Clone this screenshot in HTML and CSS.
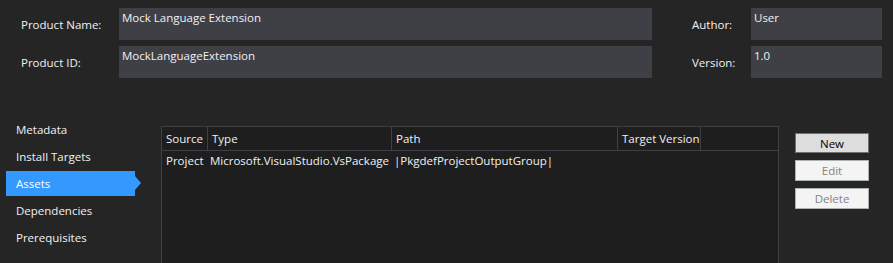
FILE: index.html
```html
<!DOCTYPE html>
<html>
<head>
<meta charset="utf-8">
<link rel="stylesheet" href="styles.css">
</head>
<body>
<div class="header">
  <div class="label">Product Name:</div>
  <div class="box">Mock Language Extension</div>
  <div class="label right">Author:</div>
  <div class="box">User</div>
  <div class="label">Product ID:</div>
  <div class="box">MockLanguageExtension</div>
  <div class="label right">Version:</div>
  <div class="box">1.0</div>
</div>
<div class="main">
  <nav class="nav">
    <div class="nav-item">Metadata</div>
    <div class="nav-item">Install Targets</div>
    <div class="nav-item selected">Assets</div>
    <div class="nav-item">Dependencies</div>
    <div class="nav-item">Prerequisites</div>
  </nav>
  <div class="grid">
    <div class="row head">
      <div class="cell">Source</div>
      <div class="cell">Type</div>
      <div class="cell">Path</div>
      <div class="cell">Target Version</div>
      <div class="cell fill"></div>
    </div>
    <div class="row data">
      <div class="cell">Project</div>
      <div class="cell tight">Microsoft.VisualStudio.VsPackage</div>
      <div class="cell tight">|PkgdefProjectOutputGroup|</div>
      <div class="cell"></div>
      <div class="cell fill"></div>
    </div>
  </div>
  <div class="buttons">
    <button class="btn primary">New</button>
    <button class="btn" disabled>Edit</button>
    <button class="btn" disabled>Delete</button>
  </div>
</div>
</body>
</html>
```

FILE: styles.css
```css
html, body {
  margin: 0;
  padding: 0;
  background: #252526;
  color: #f1f1f1;
  font-family: "Open Sans", "Noto Sans", sans-serif;
  font-size: 11.5px;
  overflow: hidden;
  height: 263px;
}

.header {
  display: grid;
  grid-template-columns: 98px 533px 99px 131px;
  grid-auto-rows: 32px;
  row-gap: 6px;
  padding: 8px 0 0 21px;
}

.label {
  display: flex;
  align-items: center;
  padding-top: 1px;
  box-sizing: border-box;
}

.label.right {
  padding-left: 40px;
}

.box {
  background: #3f3f46;
  padding: 2px 3px;
  line-height: 16px;
}

.main {
  display: flex;
  align-items: flex-start;
  margin-top: 39px;
}

.nav {
  display: flex;
  flex-direction: column;
  gap: 2px;
  margin-left: 6px;
  width: 135px;
}

.nav-item {
  position: relative;
  width: 129px;
  height: 25px;
  line-height: 25px;
  padding-left: 10px;
  box-sizing: border-box;
}

.nav-item.selected {
  background: #3399ff;
  color: #ffffff;
}

.nav-item.selected::after {
  content: "";
  position: absolute;
  left: 129px;
  top: 5px;
  border-left: 6px solid #3399ff;
  border-top: 7px solid transparent;
  border-bottom: 7px solid transparent;
}

.grid {
  margin-left: 20px;
  margin-top: 9px;
  width: 618px;
  height: 140px;
  box-sizing: border-box;
  border: 1px solid #3f3f46;
  border-bottom: none;
  background: #1e1e1e;
}

.row {
  display: grid;
  grid-template-columns: 46px 184px 226px 83px 1fr;
}

.row.head {
  height: 24px;
  border-bottom: 1px solid #3f3f46;
  box-sizing: border-box;
}

.row.head .cell {
  border-right: 1px solid #3f3f46;
  line-height: 23px;
}

.row.head .cell.fill {
  border-right: none;
}

.cell {
  box-sizing: border-box;
  padding-left: 4px;
  white-space: nowrap;
  overflow: visible;
}

.cell.tight {
  padding-left: 2px;
}

.row.data .cell {
  line-height: 20px;
}

.buttons {
  display: flex;
  flex-direction: column;
  gap: 7px;
  margin-left: 16px;
  margin-top: 16px;
}

.btn {
  width: 74px;
  height: 21px;
  margin: 0;
  padding: 0;
  font-family: inherit;
  font-size: 11.5px;
  background: #f4f4f4;
  border: 1px solid #adb2b5;
  color: #838383;
  border-radius: 0;
}

.btn.primary {
  height: 20px;
  background: #dddddd;
  border-color: #707070;
  color: #000000;
}
```
